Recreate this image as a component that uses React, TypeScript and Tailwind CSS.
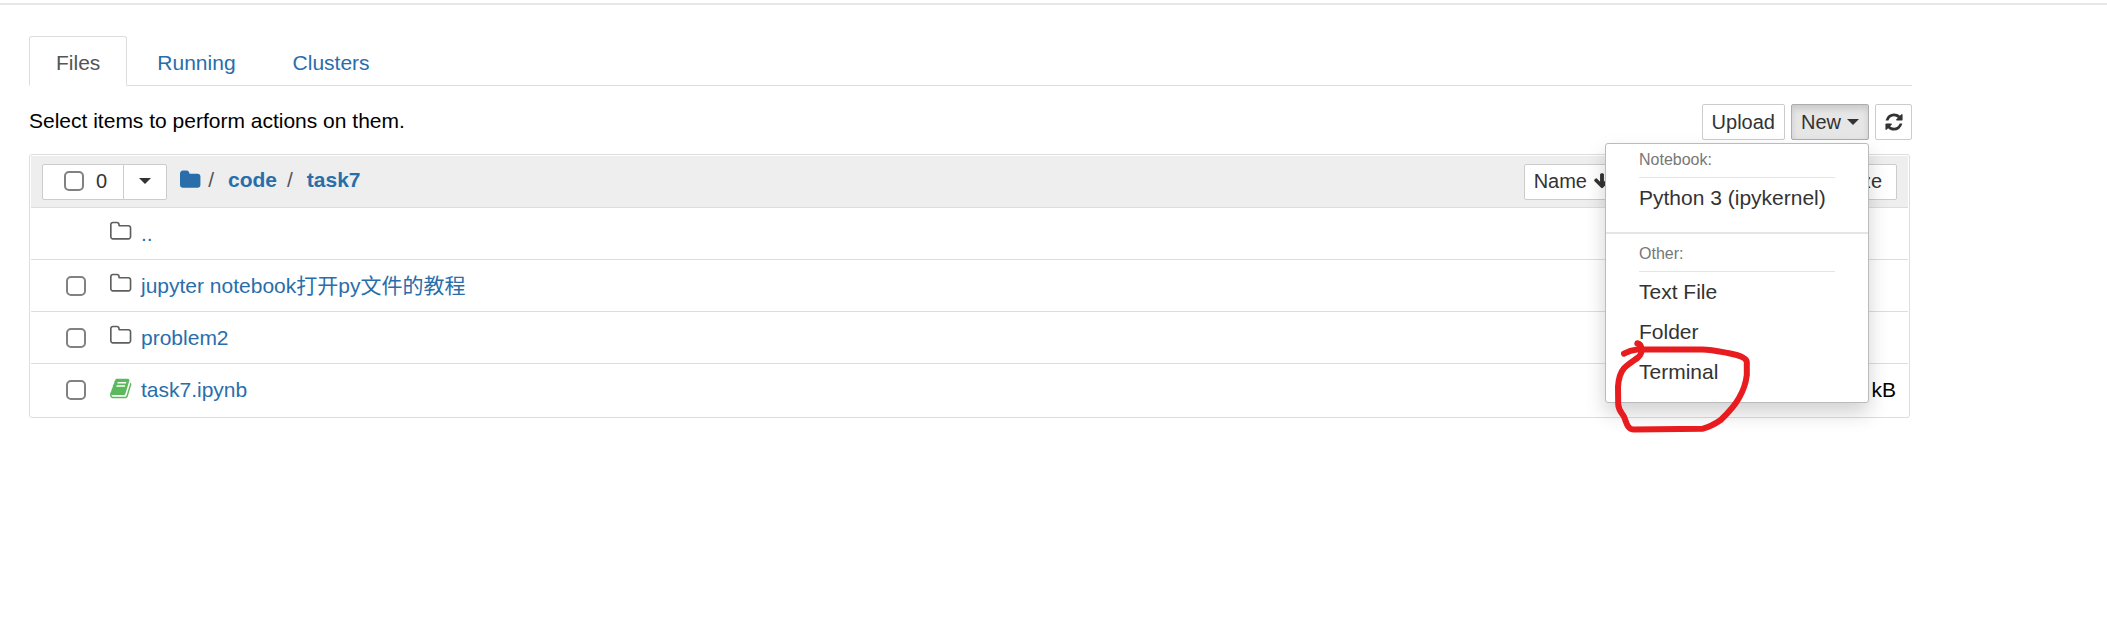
import React from "react";

const FOLDER =
  "M1664 608v704q0 92-66 158t-158 66h-1216q-92 0-158-66t-66-158v-960q0-92 66-158t158-66h320q92 0 158 66t66 158v32h672q92 0 158 66t66 158z";
const FOLDER_OUTLINE =
  "M1536 1312v-704q0-40-28-68t-68-28h-704q-40 0-68-28t-28-68v-64q0-40-28-68t-68-28h-320q-40 0-68 28t-28 68v960q0 40 28 68t68 28h1216q40 0 68-28t28-68zm128-704v704q0 92-66 158t-158 66h-1216q-92 0-158-66t-66-158v-960q0-92 66-158t158-66h320q92 0 158 66t66 158v32h672q92 0 158 66t66 158z";
const BOOK =
  "M1639 478q40 57 18 129l-275 906q-19 64-76.5 107.5t-122.5 43.5h-923q-77 0-148.5-53.5t-99.5-131.5q-24-67-2-127 0-4 3-27t4-37q1-8-3-21.5t-3-19.5q2-11 8-21t16.5-23.5 16.5-23.5q23-38 45-91.5t30-91.5q3-10 .5-30t-.5-28q3-11 17-28t17-23q21-36 42-92t25-90q1-9-2.5-32t.5-28q4-13 22-30.5t22-22.5q19-26 42.5-84.5t27.5-96.5q1-8-3-25.5t-2-26.5q2-8 9-18t18-23 17-21q8-12 16.5-30.5t15-35 16-36 19.5-32 26.5-23.5 36-11.5 47.5 5.5l-1 3q38-9 51-9h761q74 0 114 56t18 130l-274 906q-36 119-71.5 153.5t-128.5 34.5h-869q-27 0-38 15-11 16-1 43 24 70 144 70h923q29 0 56-15.5t35-41.5l300-987q7-22 5-57 38 15 59 43zm-1064 2q-4 13 2 22.5t20 9.5h608q13 0 25.5-9.5t16.5-22.5l21-64q4-13-2-22.5t-20-9.5h-608q-13 0-25.5 9.5t-16.5 22.5zm-83 256q-4 13 2 22.5t20 9.5h608q13 0 25.5-9.5t16.5-22.5l21-64q4-13-2-22.5t-20-9.5h-608q-13 0-25.5 9.5t-16.5 22.5z";
const REFRESH =
  "M1639 1056q0 5-1 7-64 268-268 434.5t-478 166.5q-146 0-282.5-55t-243.5-157l-129 129q-19 19-45 19t-45-19-19-45v-448q0-26 19-45t45-19h448q26 0 45 19t19 45-19 45l-137 137q71 66 161 102t187 36q134 0 250-65t186-179q11-17 53-117 8-23 30-23h192q13 0 22.5 9.5t9.5 22.5zm25-800v448q0 26-19 45t-45 19h-448q-26 0-45-19t-19-45 19-45l138-138q-148-137-349-137-134 0-250 65t-186 179q-11 17-53 117-8 23-30 23h-199q-13 0-22.5-9.5t-9.5-22.5v-7q65-268 270-434.5t480-166.5q146 0 284 55.5t245 156.5l130-129q19-19 45-19t45 19 19 45z";
const ARROW_DOWN =
  "M1675 832q0 53-37 90l-651 652q-39 37-91 37-53 0-90-37l-651-652q-38-36-38-90 0-53 38-91l74-75q39-37 91-37 53 0 90 37l294 294v-704q0-52 38-90t90-38h128q52 0 90 38t38 90v704l294-294q37-37 90-37 52 0 91 37l75 75q37 39 37 91z";

function Icon({ path, className }: { path: string; className: string }) {
  return (
    <svg viewBox="0 0 1792 1792" fill="currentColor" aria-hidden="true" className={className}>
      <path d={path} />
    </svg>
  );
}

function Caret() {
  return (
    <svg viewBox="0 0 12 6" fill="currentColor" aria-hidden="true" className="h-[6px] w-3 shrink-0">
      <path d="M0 0h12L6 6z" />
    </svg>
  );
}

const BOX =
  "size-5 shrink-0 appearance-none rounded-[5px] border-2 border-[#818181] bg-white checked:bg-[#296eaa]";
const BUTTON =
  "flex h-9 items-center rounded-[2px] border border-[#ccc] bg-white pb-px text-xl leading-7 text-[#333]";

type Item = { name: string; kind: "folder" | "notebook"; selectable: boolean; size?: string };

const items: Item[] = [
  { name: "..", kind: "folder", selectable: false },
  { name: "jupyter notebook打开py文件的教程", kind: "folder", selectable: true },
  { name: "problem2", kind: "folder", selectable: true },
  { name: "task7.ipynb", kind: "notebook", selectable: true, size: "kB" },
];

function Tabs() {
  return (
    <nav className="flex border-b border-[#ddd] text-[21px] leading-7">
      <a
        href="#files"
        className="-mb-px mr-[3px] rounded-t-[3px] border border-[#ddd] border-b-white bg-white px-[26px] pt-3 pb-2 text-[#555]"
      >
        Files
      </a>
      <a href="#running" className="mr-[3px] border border-transparent px-[26px] pt-3 pb-[7px] text-[#296eaa]">
        Running
      </a>
      <a href="#clusters" className="border border-transparent px-[26px] pt-3 pb-[7px] text-[#296eaa]">
        Clusters
      </a>
    </nav>
  );
}

function NewMenu() {
  const entry = "block w-full px-[33px] text-left text-[21px] leading-[30px] text-[#333]";
  const heading = "mx-[33px] border-b border-[#e5e5e5] text-base leading-6 text-[#777]";
  return (
    <div className="absolute top-full right-0 z-10 mt-[3px] w-[264px] rounded-[3px] border border-[#bbb] bg-white pb-[10px] shadow-[0_10px_20px_rgba(0,0,0,0.18)]">
      <div className={heading + " pt-1 pb-[5px]"}>Notebook:</div>
      <button type="button" className={entry + " pt-[5px] pb-[19px]"}>
        Python 3 (ipykernel)
      </button>
      <hr className="border-t-2 border-[#e5e5e5]" />
      <div className={heading + " pt-2 pb-[5px]"}>Other:</div>
      <button type="button" className={entry + " py-[5px]"}>
        Text File
      </button>
      <button type="button" className={entry + " py-[5px]"}>
        Folder
      </button>
      <button type="button" className={entry + " py-[5px]"}>
        Terminal
      </button>
      <svg
        viewBox="0 0 150 110"
        fill="none"
        aria-hidden="true"
        className="pointer-events-none absolute top-[188px] left-[3px] h-[110px] w-[150px]"
      >
        <path
          d="M15 21.7C19 19.5 22 18.2 28 17.6L93 17.4C103 17.4 111 19.5 120 21.3C129 23 137.5 25.5 137.8 30L137.8 43C137 51 134 59 130 66C125 75 119 81 111.7 88C106 92 100 95 93.3 96.8L25 97.5C18 97.5 17.5 90 15 84.7C13 81 9.5 78.5 9.2 72L9 54.7C9.5 47 11 41 15 36.3C19 32 25 28.5 29 25.5C32 23 33.5 19 32.3 15.5C31.7 13 30.5 11.6 28.3 11.3"
          stroke="#e81b1e"
          strokeWidth="6"
          strokeLinecap="round"
          strokeLinejoin="round"
        />
      </svg>
    </div>
  );
}

function Toolbar() {
  return (
    <div className="mt-[18px] flex items-center justify-between">
      <p className="pb-[2px] text-[21px] leading-7 text-black">Select items to perform actions on them.</p>
      <div className="flex gap-[6px]">
        <button type="button" className={BUTTON + " px-[9px]"}>
          Upload
        </button>
        <div className="relative">
          <button
            type="button"
            aria-expanded="true"
            className="flex h-9 items-center gap-[6px] rounded-[2px] border border-[#adadad] bg-[#e6e6e6] px-[9px] pb-px text-xl leading-7 text-[#333] shadow-[inset_0_4px_6px_rgba(0,0,0,0.125)]"
          >
            New
            <Caret />
          </button>
          <NewMenu />
        </div>
        <button type="button" aria-label="Refresh" className={BUTTON + " w-[37px] justify-center"}>
          <Icon path={REFRESH} className="size-5" />
        </button>
      </div>
    </div>
  );
}

function ListHeader() {
  return (
    <div className="flex h-[52px] items-center justify-between border-b border-[#ddd] bg-[#eee] px-[11px]">
      <div className="flex items-center text-[21px] leading-7">
        <div className="flex">
          <label className={BUTTON + " gap-3 rounded-r-none pr-4 pl-[21px]"}>
            <input type="checkbox" className={BOX} />0
          </label>
          <button type="button" aria-label="Select by kind" className={BUTTON + " -ml-px rounded-l-none px-[15px]"}>
            <Caret />
          </button>
        </div>
        <nav className="ml-[13px] flex items-center pb-[3px] text-[#555]">
          <a href="#home" aria-label="Home" className="text-[#296eaa]">
            <Icon path={FOLDER} className="size-[22px]" />
          </a>
          <span className="ml-[6px]">/</span>
          <a href="#code" className="ml-[14px] font-bold text-[#296eaa]">
            code
          </a>
          <span className="ml-[10px]">/</span>
          <a href="#task7" className="ml-[14px] font-bold text-[#296eaa]">
            task7
          </a>
        </nav>
      </div>
      <div className="flex">
        <button type="button" className={BUTTON + " gap-[6px] px-[9px]"}>
          Name
          <Icon path={ARROW_DOWN} className="size-[18px]" />
        </button>
        <button type="button" aria-label="Last Modified" className={BUTTON + " -ml-px w-[204px]"} />
        <button type="button" className={BUTTON + " -ml-px w-[74px] justify-end px-[14px]"}>
          Size
        </button>
      </div>
    </div>
  );
}

function Row({ item }: { item: Item }) {
  return (
    <li className="flex h-[52px] items-center border-b border-[#ddd] pr-3 pl-[35px] text-[21px] leading-7 last:border-b-0">
      {item.selectable ? (
        <input type="checkbox" aria-label={item.name} className={BOX} />
      ) : (
        <span className="size-5" />
      )}
      {item.kind === "folder" ? (
        <Icon path={FOLDER_OUTLINE} className="mb-1 ml-6 size-[23px] text-[#5e5e5e]" />
      ) : (
        <Icon path={BOOK} className="mb-1 ml-6 size-[23px] text-[#5cb85c]" />
      )}
      <a href="#item" className="ml-2 text-[#296eaa]">
        {item.name}
      </a>
      {item.size && <span className="ml-auto text-black">{item.size}</span>}
    </li>
  );
}

export default function App() {
  return (
    <div className="min-h-screen bg-white pt-[3px] font-['Liberation_Sans','Noto_Sans_CJK_SC',sans-serif]">
      <div className="border-t-2 border-[#e7e7e7]" />
      <main className="mt-[31px] mr-[195px] ml-[29px]">
        <Tabs />
        <Toolbar />
        <section className="mt-[14px] mr-[2px] rounded-[3px] border border-[#ddd] p-px">
          <ListHeader />
          <ul>
            {items.map((item) => (
              <Row key={item.name} item={item} />
            ))}
          </ul>
        </section>
      </main>
    </div>
  );
}
